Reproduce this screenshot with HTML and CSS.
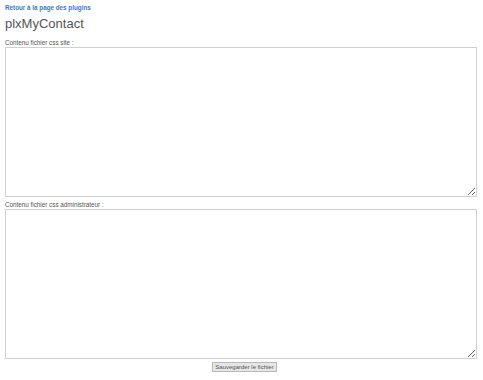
FILE: index.html
```html
<!DOCTYPE html>
<html>
<head>
    <title>plxMyContact</title>
    <link rel="stylesheet" href="styles.css">
</head>
<body>
    <p class="back"><a href="#">Retour à la page des plugins</a></p>
    <h2>plxMyContact</h2>
    <form class="css-form">
        <label for="cssSite">Contenu fichier css site :</label>
        <textarea id="cssSite"></textarea>
        <label for="cssAdmin">Contenu fichier css administrateur :</label>
        <textarea id="cssAdmin"></textarea>
        <div class="actions">
            <input type="submit" value="Sauvegarder le fichier">
        </div>
    </form>
</body>
</html>
```

FILE: styles.css
```css
body {
    font-family: Arial, "Liberation Sans", sans-serif;
    margin: 0;
    padding: 3px 5px 0 5px;
    color: #333;
    background: #fff;
}

.back {
    margin: 0;
    font-size: 6.3px;
    font-weight: bold;
    line-height: 10px;
}

.back a {
    color: #3a79c4;
    text-decoration: none;
}

h2 {
    font-size: 13px;
    font-weight: normal;
    color: #555;
    margin: 3px 0 6px 0;
    line-height: 16px;
}

.css-form label {
    display: block;
    font-size: 6.3px;
    color: #555;
    line-height: 9px;
}

.css-form textarea {
    display: block;
    box-sizing: border-box;
    width: 472px;
    height: 150px;
    margin: 0 0 3px 0;
    border: 1px solid #d0d0d0;
    padding: 2px;
}

.actions {
    display: flex;
    justify-content: center;
    padding-left: 6px;
    margin-top: 2px;
}

.actions input {
    font-family: Arial, "Liberation Sans", sans-serif;
    font-size: 6px;
    line-height: 8px;
    color: #555;
    background: #e6e6e6;
    border: 1px solid #b8b8b8;
    padding: 0 2px;
    height: 10px;
}
```
